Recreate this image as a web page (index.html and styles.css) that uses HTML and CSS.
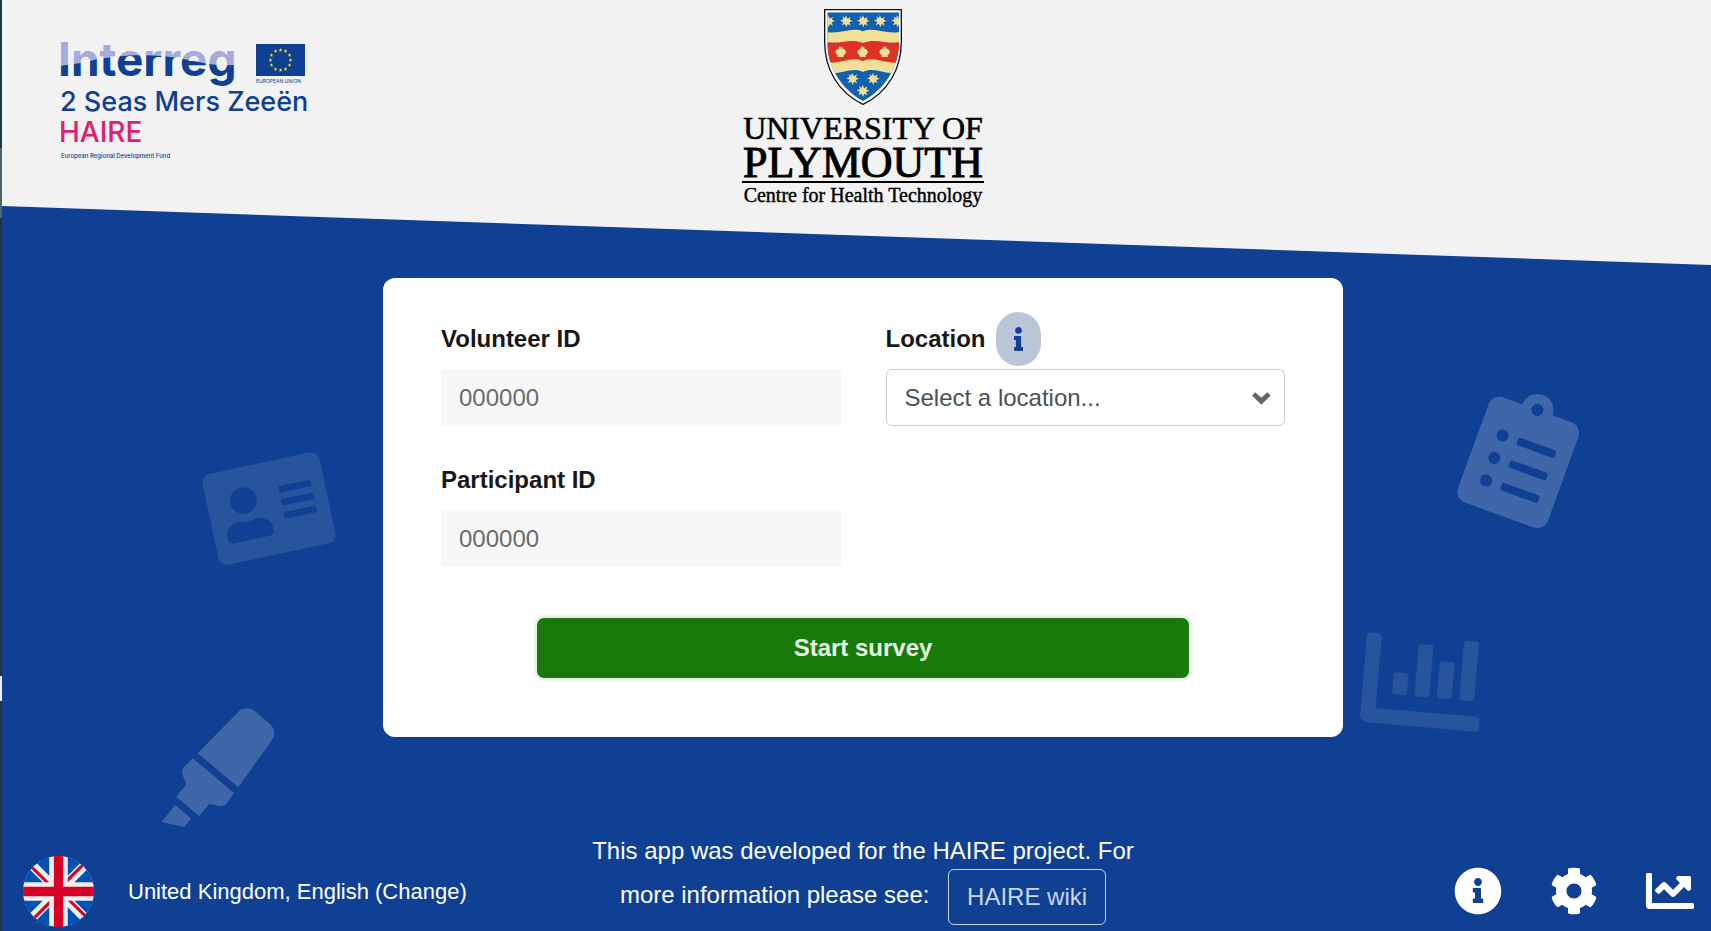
FILE: index.html
```html
<!DOCTYPE html>
<html lang="en">
<head>
<meta charset="utf-8">
<meta name="viewport" content="width=device-width, initial-scale=1">
<title>HAIRE survey</title>
<link rel="stylesheet" href="styles.css">
</head>
<body>
<div class="page">
  <header class="header">
    <svg class="logo-interreg" width="246" height="120" viewBox="0 0 246 120" role="img" aria-label="Interreg 2 Seas Mers Zeeën HAIRE">
      <defs>
        <pattern id="wave" patternUnits="userSpaceOnUse" x="-2" y="-4" width="200" height="60">
          <rect width="200" height="60" fill="#a5acdb"/>
          <path d="M0 26L22 23C55 14 95 13 125 19C150 25 168 28 200 22V60H0Z" fill="#0f4093"/>
        </pattern>
        <path id="eu-star" d="M0-2L.5-.6H2L.8.3L1.2 1.7L0 .9L-1.2 1.7L-.8.3L-2-.6H-.5Z"/>
      </defs>
      <text class="t-interreg" x="-3" y="32" fill="url(#wave)">Interreg</text>
      <rect x="195" y="0" width="49" height="32" fill="#0f4093"/>
      <g fill="#f5e23c" transform="translate(219.500 16)">
        <use href="#eu-star" y="-10"/><use href="#eu-star" x="5" y="-9"/><use href="#eu-star" x="9" y="-5"/>
        <use href="#eu-star" x="10"/><use href="#eu-star" x="9" y="5"/><use href="#eu-star" x="5" y="9"/>
        <use href="#eu-star" y="10"/><use href="#eu-star" x="-5" y="9"/><use href="#eu-star" x="-9" y="5"/>
        <use href="#eu-star" x="-10"/><use href="#eu-star" x="-9" y="-5"/><use href="#eu-star" x="-5" y="-9"/>
      </g>
      <text class="t-union" x="195" y="39">EUROPEAN UNION</text>
      <text class="t-seas" x="-1" y="67">2 Seas Mers Zeeën</text>
      <text class="t-haire" x="-2" y="98">HAIRE</text>
      <text class="t-fund" x="0" y="114">European Regional Development Fund</text>
    </svg>
    <svg class="logo-plymouth" width="286" height="216" viewBox="0 0 286 216" role="img" aria-label="University of Plymouth Centre for Health Technology">
      <defs>
        <path id="sun" d="M-2-18L4-7L13-13L10-4L19 0L9 4L13 14L4 9L0 19L-4 9L-14 13L-9 3L-19-1L-9-5L-12-14L-4-8Z"/>
        <path id="shell" d="M-5-17H5L6-11C14-10 17-3 15 3C13 6 11 8 8 10L10 14H-10L-8 10C-11 8-13 6-15 3C-17-3-14-10-6-11Z"/>
        <clipPath id="shield"><path d="M322 37H537V125C537 200 496 266 429 303C362 266 322 200 322 125Z"/></clipPath>
      </defs>
      <g transform="scale(.3333)">
        <path d="M314 29H544V125C544 205 505 277 429 313C353 277 314 205 314 125Z" fill="#fff" stroke="#111" stroke-width="4"/>
        <g clip-path="url(#shield)">
          <rect x="310" y="30" width="240" height="290" fill="#1260b0"/>
          <path d="M310 92C350 110 390 78 429 94C468 78 508 110 548 92V128H310Z" fill="#efdf97"/>
          <path d="M310 124C350 139 390 110 429 130C468 110 508 139 548 124V190H310Z" fill="#e03127"/>
          <path d="M310 181C350 203 390 164 429 184C468 164 508 203 548 181V213C508 235 468 196 429 216C390 196 350 235 310 213Z" fill="#efdf97"/>
          <g fill="#efdf97">
            <use href="#sun" x="326" y="63"/><use href="#sun" x="379" y="63"/><use href="#sun" x="430" y="63"/><use href="#sun" x="481" y="63"/><use href="#sun" x="533" y="63"/>
            <use href="#shell" x="362" y="157"/><use href="#shell" x="428" y="157"/><use href="#shell" x="494" y="157"/>
            <use href="#sun" x="398" y="236"/><use href="#sun" x="460" y="236"/><use href="#sun" x="429" y="272"/>
          </g>
        </g>
      </g>
      <text class="t-uni" x="143" y="139">UNIVERSITY OF</text>
      <text class="t-ply" x="143" y="177">PLYMOUTH</text>
      <rect x="22" y="181" width="242" height="2"/>
      <text class="t-centre" x="143" y="202">Centre for Health Technology</text>
    </svg>
  </header>

  <div class="decor" aria-hidden="true">
    <svg class="decor-card" viewBox="0 32 576 448"><path d="M528 32H48C21.500 32 0 53.500 0 80v352c0 26.500 21.500 48 48 48h480c26.500 0 48-21.500 48-48V80c0-26.500-21.500-48-48-48zm-352 96c35.300 0 64 28.700 64 64s-28.700 64-64 64-64-28.700-64-64 28.700-64 64-64zm112 236.800c0 10.600-10 19.200-22.400 19.200H86.400C74 384 64 375.400 64 364.800v-19.200c0-31.800 30.100-57.600 67.200-57.600h5c12.300 5.100 25.700 8 39.800 8s27.600-2.900 39.800-8h5c37.100 0 67.200 25.800 67.200 57.600v19.200zM512 312c0 4.400-3.600 8-8 8H360c-4.400 0-8-3.600-8-8v-16c0-4.400 3.600-8 8-8h144c4.400 0 8 3.600 8 8v16zm0-64c0 4.400-3.600 8-8 8H360c-4.400 0-8-3.600-8-8v-16c0-4.400 3.600-8 8-8h144c4.400 0 8 3.600 8 8v16zm0-64c0 4.400-3.600 8-8 8H360c-4.400 0-8-3.600-8-8v-16c0-4.400 3.600-8 8-8h144c4.400 0 8 3.600 8 8v16z"/></svg>
    <svg class="decor-pen" viewBox="0 0 544 512"><path d="M0 479.980L99.920 512l35.450-35.450-67.040-67.040L0 479.980zm124.610-240.010a36.592 36.592 0 0 0-10.790 38.100l13.050 42.830-50.930 50.940 96.230 96.230 50.860-50.860 42.740 13.080c13.730 4.200 28.650-.010 38.150-10.780l35.550-41.640-173.340-173.340-41.520 35.440zm403.310-160.700l-63.200-63.200c-20.490-20.490-53.380-21.520-75.120-2.350L190.550 183.680l169.770 169.780L530.270 154.400c19.180-21.740 18.150-54.630-2.350-75.130z"/></svg>
    <svg class="decor-list" viewBox="0 0 384 512"><path d="M336 64h-80c0-35.300-28.700-64-64-64s-64 28.700-64 64H48C21.500 64 0 85.500 0 112v352c0 26.500 21.500 48 48 48h288c26.500 0 48-21.500 48-48V112c0-26.500-21.500-48-48-48zM96 424c-13.300 0-24-10.700-24-24s10.700-24 24-24 24 10.700 24 24-10.700 24-24 24zm0-96c-13.300 0-24-10.700-24-24s10.700-24 24-24 24 10.700 24 24-10.700 24-24 24zm0-96c-13.300 0-24-10.700-24-24s10.700-24 24-24 24 10.700 24 24-10.700 24-24 24zm96-192c13.300 0 24 10.700 24 24s-10.700 24-24 24-24-10.700-24-24 10.700-24 24-24zm128 368c0 4.400-3.600 8-8 8H168c-4.400 0-8-3.600-8-8v-16c0-4.400 3.600-8 8-8h144c4.400 0 8 3.600 8 8v16zm0-96c0 4.400-3.600 8-8 8H168c-4.400 0-8-3.600-8-8v-16c0-4.400 3.600-8 8-8h144c4.400 0 8 3.600 8 8v16zm0-96c0 4.400-3.600 8-8 8H168c-4.400 0-8-3.600-8-8v-16c0-4.400 3.600-8 8-8h144c4.400 0 8 3.600 8 8v16z"/></svg>
    <svg class="decor-chart" viewBox="0 0 512 512"><path d="M332.800 320h38.400c6.400 0 12.800-6.400 12.800-12.800V172.800c0-6.400-6.400-12.800-12.800-12.800h-38.400c-6.400 0-12.800 6.400-12.800 12.800v134.400c0 6.400 6.400 12.800 12.800 12.800zm96 0h38.400c6.400 0 12.800-6.400 12.800-12.800V76.800c0-6.400-6.400-12.800-12.800-12.800h-38.400c-6.400 0-12.800 6.400-12.800 12.800v230.400c0 6.400 6.400 12.800 12.800 12.800zm-288 0h38.400c6.400 0 12.800-6.400 12.800-12.800v-70.400c0-6.400-6.400-12.800-12.800-12.800h-38.400c-6.400 0-12.800 6.400-12.800 12.800v70.400c0 6.400 6.400 12.800 12.800 12.800zm96 0h38.400c6.400 0 12.800-6.400 12.800-12.800V108.800c0-6.400-6.400-12.800-12.800-12.800h-38.400c-6.400 0-12.800 6.400-12.800 12.800v198.400c0 6.400 6.400 12.800 12.800 12.800zM496 384H64V80c0-8.840-7.160-16-16-16H16C7.160 64 0 71.160 0 80v336c0 17.670 14.330 32 32 32h464c8.840 0 16-7.160 16-16v-32c0-8.840-7.160-16-16-16z"/></svg>
  </div>

  <main class="main">
    <form class="card">
      <div class="fields">
        <div class="field">
          <div class="label-row"><label for="volunteer">Volunteer ID</label></div>
          <input class="control" id="volunteer" type="text" placeholder="000000">
        </div>
        <div class="field">
          <div class="label-row">
            <label for="location">Location</label>
            <button class="hint" type="button" aria-label="About locations">
              <svg width="9" height="24" viewBox="0 0 192 512"><path d="M20 424.229h20V279.771H20c-11.046 0-20-8.954-20-20V212c0-11.046 8.954-20 20-20h112c11.046 0 20 8.954 20 20v212.229h20c11.046 0 20 8.954 20 20V492c0 11.046-8.954 20-20 20H20c-11.046 0-20-8.954-20-20v-47.771c0-11.046 8.954-20 20-20zM96 0C56.235 0 24 32.235 24 72s32.235 72 72 72 72-32.235 72-72S135.764 0 96 0z"/></svg>
            </button>
          </div>
          <div class="select-wrap">
            <select class="control select" id="location"><option>Select a location...</option></select>
            <svg class="chevron" width="19" height="13" viewBox="0 0 57 38"><path d="M0 10L10 0L28 17L46 0L56 10L28 38Z"/></svg>
          </div>
        </div>
        <div class="field">
          <div class="label-row"><label for="participant">Participant ID</label></div>
          <input class="control" id="participant" type="text" placeholder="000000">
        </div>
      </div>
      <button class="start" type="submit">Start survey</button>
    </form>
  </main>

  <footer class="footer">
    <a class="language" href="#language">
      <svg width="71" height="71" viewBox="0 0 512 512" aria-hidden="true">
        <circle cx="256" cy="256" r="256" fill="#f0f0f0"/>
        <path fill="#0052b4" d="M52.920 100.142c-20.109 26.163-35.272 56.318-44.101 89.077h133.178L52.920 100.142zM503.181 189.219c-8.829-32.758-23.993-62.913-44.101-89.076l-89.075 89.076h133.176zM8.819 322.784c8.830 32.758 23.993 62.913 44.101 89.075l89.074-89.075H8.819zM411.858 52.921c-26.163-20.109-56.317-35.272-89.076-44.102v133.177l89.076-89.075zM100.142 459.079c26.163 20.109 56.318 35.272 89.076 44.102V370.005l-89.076 89.074zM189.217 8.819c-32.758 8.830-62.913 23.993-89.075 44.101l89.075 89.075V8.819zM322.783 503.181c32.758-8.830 62.913-23.993 89.075-44.101l-89.075-89.075v133.176zM370.005 322.784l89.075 89.076c20.108-26.162 35.272-56.318 44.101-89.076H370.005z"/>
        <path fill="#d80027" d="M509.833 222.609H289.392V2.167A258.556 258.556 0 0 0 256 0c-11.319 0-22.461.744-33.391 2.167v220.441H2.167A258.556 258.556 0 0 0 0 256c0 11.319.744 22.461 2.167 33.391h220.441v220.442a258.350 258.350 0 0 0 66.783 0V289.392h220.442A258.533 258.533 0 0 0 512 256c0-11.317-.744-22.461-2.167-33.391zM322.783 322.784L437.019 437.020a256.636 256.636 0 0 0 15.048-16.435l-97.802-97.802h-31.482zM189.217 322.784L74.980 437.019a256.636 256.636 0 0 0 16.435 15.048l97.802-97.804zM189.217 189.219L74.981 74.980a256.636 256.636 0 0 0-15.048 16.435l97.803 97.803zM322.783 189.219L437.020 74.981a256.328 256.328 0 0 0-16.435-15.047l-97.802 97.803z"/>
      </svg>
      <span>United Kingdom, English (Change)</span>
    </a>
    <p class="about">This app was developed for the HAIRE project. For more information please see: <a class="wiki" href="#wiki">HAIRE wiki</a></p>
    <nav class="tools">
      <a href="#info" aria-label="Information"><svg viewBox="0 0 512 512"><path d="M256 8C119.043 8 8 119.083 8 256c0 136.997 111.043 248 248 248s248-111.003 248-248C504 119.083 392.957 8 256 8zm0 110c23.196 0 42 18.804 42 42s-18.804 42-42 42-42-18.804-42-42 18.804-42 42-42zm56 254c0 6.627-5.373 12-12 12h-88c-6.627 0-12-5.373-12-12v-24c0-6.627 5.373-12 12-12h12v-64h-12c-6.627 0-12-5.373-12-12v-24c0-6.627 5.373-12 12-12h64c6.627 0 12 5.373 12 12v100h12c6.627 0 12 5.373 12 12v24z"/></svg></a>
      <a href="#settings" aria-label="Settings"><svg viewBox="0 0 512 512"><path d="M487.400 315.700l-42.600-24.600c4.300-23.200 4.300-47 0-70.200l42.600-24.600c4.900-2.800 7.100-8.600 5.500-14-11.100-35.600-30-67.800-54.700-94.600-3.800-4.100-10-5.100-14.800-2.300L380.800 110c-17.900-15.400-38.500-27.300-60.800-35.100V25.800c0-5.600-3.900-10.500-9.400-11.700-36.700-8.200-74.300-7.800-109.200 0-5.500 1.200-9.400 6.100-9.400 11.700V75c-22.200 7.900-42.800 19.800-60.800 35.100L88.700 85.500c-4.900-2.800-11-1.900-14.800 2.300-24.700 26.700-43.600 58.900-54.700 94.600-1.700 5.400.6 11.200 5.500 14L67.300 221c-4.300 23.200-4.300 47 0 70.200l-42.600 24.600c-4.900 2.800-7.100 8.600-5.500 14 11.100 35.600 30 67.800 54.700 94.600 3.800 4.100 10 5.100 14.800 2.300l42.600-24.600c17.900 15.400 38.500 27.300 60.800 35.100v49.200c0 5.600 3.900 10.500 9.400 11.700 36.700 8.200 74.300 7.800 109.200 0 5.500-1.200 9.400-6.100 9.400-11.700v-49.200c22.200-7.900 42.800-19.800 60.800-35.100l42.600 24.600c4.900 2.800 11 1.900 14.800-2.300 24.700-26.700 43.600-58.900 54.700-94.600 1.500-5.500-.7-11.300-5.600-14.100zM256 336c-44.100 0-80-35.900-80-80s35.900-80 80-80 80 35.900 80 80-35.900 80-80 80z"/></svg></a>
      <a href="#results" aria-label="Results"><svg viewBox="0 0 512 512"><path d="M496 384H64V80c0-8.840-7.160-16-16-16H16C7.160 64 0 71.160 0 80v336c0 17.670 14.330 32 32 32h464c8.840 0 16-7.160 16-16v-32c0-8.840-7.160-16-16-16zM464 96H345.940c-21.380 0-32.090 25.850-16.970 40.970l32.400 32.400L288 242.750l-73.370-73.370c-12.500-12.500-32.760-12.500-45.250 0l-68.690 68.690c-6.250 6.250-6.250 16.380 0 22.630l22.620 22.620c6.250 6.250 16.380 6.250 22.630 0L192 237.250l73.370 73.370c12.500 12.500 32.760 12.500 45.250 0l96-96 32.400 32.400c15.120 15.120 40.970 4.410 40.970-16.970V112c.010-8.840-7.150-16-15.990-16z"/></svg></a>
    </nav>
  </footer>
</div>
</body>
</html>
```
FILE: styles.css
```css
* { box-sizing: border-box; }

body {
  margin: 0;
  padding-left: 2px;
  background: linear-gradient(#203642 0 148px, #50626c 148px 218px, #26343f 218px 676px, #f4f4f4 676px 701px, #26343f 701px);
  font-family: "Liberation Sans", Arial, sans-serif;
  font-size: 24px;
  color: #171717;
}

.page {
  position: relative;
  display: flex;
  flex-direction: column;
  min-height: 100vh;
  background: #0f4093;
  overflow: hidden;
}

.header {
  display: grid;
  grid-template-columns: 1fr auto 1fr;
  align-items: start;
  height: 265px;
  padding-left: 13px;
  background: #f2f2f2;
  clip-path: polygon(0 0, 100% 0, 100% 100%, 0 206px);
}

.logo-interreg {
  margin: 44px 0 0 46px;
  overflow: visible;
}

.logo-interreg text {
  font-family: Inter, "Open Sans", sans-serif;
  fill: #0f4093;
}

.logo-interreg .t-interreg { font-size: 46px; font-weight: 700; fill: url(#wave); }
.logo-interreg .t-union { font-size: 5px; }
.logo-interreg .t-seas { font-size: 27px; font-weight: 500; }
.logo-interreg .t-haire { font-size: 28px; font-weight: 500; fill: #e0206f; }
.logo-interreg .t-fund { font-size: 6px; font-weight: 500; }

.logo-plymouth text {
  font-family: "Liberation Serif", "Times New Roman", serif;
  text-anchor: middle;
  fill: #000;
  stroke: #000;
}

.logo-plymouth .t-uni { font-size: 32px; stroke-width: .6px; }
.logo-plymouth .t-ply { font-size: 44px; stroke-width: 1px; }
.logo-plymouth .t-centre { font-size: 20px; stroke-width: .4px; }

/* Tilted background artwork on either side of the card */
.decor svg {
  position: absolute;
  fill: #fff;
}

.decor-card { left: 207px; top: 462px; width: 120px; opacity: .1; transform: rotate(-12deg); }
.decor-pen { left: 155px; top: 711px; width: 120px; opacity: .2; transform: rotate(-5deg); }
.decor-list { right: 142px; top: 391px; width: 96px; opacity: .2; transform: rotate(20deg); }
.decor-chart { right: 228px; top: 622px; width: 120px; opacity: .1; transform: rotate(5deg); }

.main {
  position: relative;
  display: flex;
  justify-content: center;
  flex: 1;
  align-items: flex-start;
  padding: 13px 0 24px 13px;
}

.card {
  width: 100%;
  max-width: 960px;
  padding: 34px 58px 56px;
  border-radius: 12px;
  background: #fff;
}

.fields {
  display: grid;
  grid-template-columns: 1fr 1fr;
  gap: 27px 45px;
}

.label-row {
  display: flex;
  align-items: center;
  gap: 10px;
  height: 54px;
  margin-bottom: 3px;
  font-weight: 700;
}

.hint {
  display: flex;
  align-items: center;
  justify-content: center;
  width: 45px;
  height: 54px;
  padding: 0;
  border: 0;
  border-radius: 24px;
  background: #bac6d8;
  fill: #0f4093;
}

.control {
  display: block;
  width: 100%;
  height: 57px;
  padding: 0 18px;
  border: 0;
  border-radius: 0;
  background: #f7f7f7;
  font: inherit;
  color: #495057;
}

.control::placeholder { color: #6c6c6c; opacity: 1; }

.select-wrap { position: relative; }

.select {
  appearance: none;
  border: 1px solid #ccc;
  border-radius: 6px;
  background: #fff;
}

.chevron {
  position: absolute;
  right: 14px;
  top: 23px;
  fill: #666;
  pointer-events: none;
}

.start {
  display: block;
  width: 78%;
  height: 66px;
  margin: 48px auto 0;
  border: 3px solid #e8f2e7;
  border-radius: 10px;
  background: #187b09;
  font: inherit;
  font-weight: 700;
  color: #e8f5e6;
}

.footer {
  position: relative;
  display: grid;
  grid-template-columns: 1fr 560px 1fr;
  align-items: end;
  padding: 0 8px 4px 21px;
  color: #fff;
}

.footer a { color: inherit; text-decoration: none; }

.language {
  display: flex;
  align-items: center;
  gap: 34px;
  font-size: 22px;
}

.about {
  margin: 0 0 2px;
  text-align: center;
  line-height: 36px;
}

.footer .wiki {
  display: inline-block;
  margin-left: 12px;
  padding: 9px 18px;
  border: 1px solid #c8d6ee;
  border-radius: 6px;
  color: #c8d6ee;
  vertical-align: middle;
}

.tools {
  display: flex;
  justify-content: flex-end;
  gap: 48px;
  padding: 12px 9px;
}

.tools svg {
  display: block;
  width: 48px;
  height: 48px;
  fill: #fff;
}
```
